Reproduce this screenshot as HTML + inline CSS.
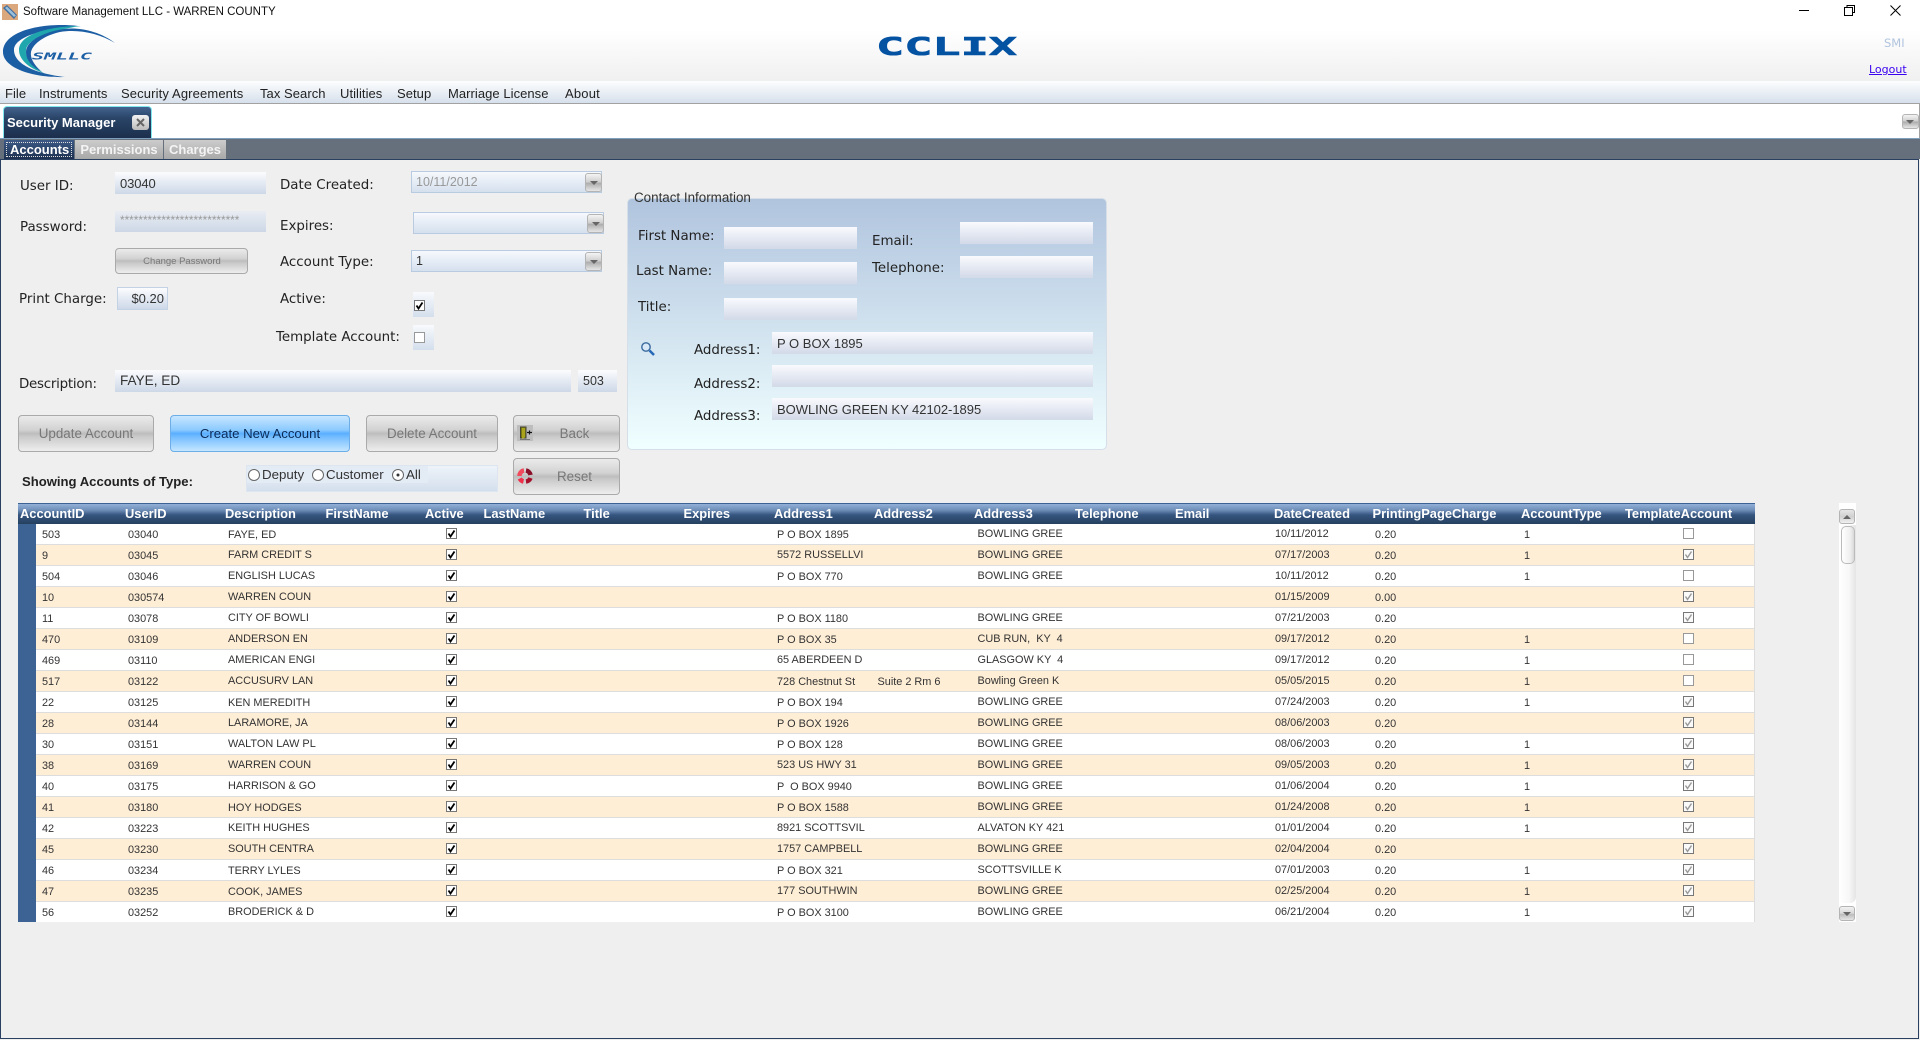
<!DOCTYPE html>
<html lang="en"><head><meta charset="utf-8"><title>CCLIX Security Manager</title>
<style>
html,body{margin:0;padding:0;background:#efefef;width:1920px;height:1040px;overflow:hidden}
body{position:relative;font-family:"Liberation Sans",Arial,sans-serif;color:#333}
div,span,a,svg{position:absolute;white-space:pre}
.lb{font-family:"DejaVu Sans",Verdana,sans-serif;font-size:13.4px;color:#222;line-height:18px;height:18px;margin-top:2px}
.in{background:linear-gradient(#fbfcfe,#cdd8e8);font-size:13px;line-height:22px;color:#333;padding-left:5px;box-sizing:border-box}
.in2{background:linear-gradient(#f9fafe,#d2d9e8);font-size:13px;line-height:24px;color:#333;padding-left:5px;box-sizing:border-box}
.cb{border:1px solid #b9cbe0;box-sizing:border-box;background:linear-gradient(#f6f9fd,#d5e0ee);font-size:12.5px;line-height:21px;padding-left:4px}
.cbb{width:17px;height:19px;box-sizing:border-box;border:1px solid #b4b4b4;border-radius:3px;background:linear-gradient(#f4f4f4,#ccc 50%,#aaa 52%,#e6e6e6)}
.cbb::after{content:"";position:absolute;left:4px;top:7px;border-left:4px solid transparent;border-right:4px solid transparent;border-top:4px solid #666}
.btn{box-sizing:border-box;border:1px solid #aaa;border-radius:4px;background:linear-gradient(#ebebeb,#d2d2d2 40%,#bdbdbd 50%,#cbcbcb 60%,#eee);color:#777;font-size:13.4px;line-height:35px;text-align:center}
.hd{top:0;font-weight:bold;font-size:12.9px;color:#fff;line-height:21px;height:21px}
.m{top:85px;font-size:13px;line-height:18px;color:#222;letter-spacing:.05px}
.r{left:36px;width:1718px;height:20px;border-bottom:1px solid #ddd;border-right:1px solid #ddd;background:#fff;font-size:10.9px;line-height:20px;color:#333}
.o{background:#ffeed6}
.r span{top:1px}
.r .u{top:0}
.a{left:6px}.b{left:92px}.c{left:192px}.d{left:741px}.e{left:841.5px}.f{left:941.5px}.g{left:1239px}.h{left:1339px}.i{left:1488px}
.k{left:410px;top:4px;width:11px;height:11px}
.t{left:1647px;top:4px;width:11px;height:11px}
</style></head><body>
<svg width="0" height="0"><defs>
<g id="kc"><rect x=".5" y=".5" width="10" height="10" fill="#fff" stroke="#777"/><path d="M2.5 5.5 4.5 8.5 8.5 2.5" fill="none" stroke="#000" stroke-width="1.8"/></g>
<g id="tc"><rect x=".5" y=".5" width="10" height="10" fill="#fafafa" stroke="#777"/><path d="M2.5 5.5 4.5 8.5 8.5 2.5" fill="none" stroke="#999" stroke-width="1.4"/></g>
<g id="tu"><rect x=".5" y=".5" width="10" height="10" fill="#fff" stroke="#999"/></g>
</defs></svg>

<!-- title bar -->
<div style="left:0;top:0;width:1920px;height:26px;background:#fff"></div>
<svg style="left:2px;top:4px" width="16" height="16" viewBox="0 0 16 16"><rect width="16" height="16" fill="#dba77c"/><path d="M1 4 5 1 15 11 12 15Z" fill="#3f6f9f"/><path d="M3 4 5 2.500 14 11.500 12 13Z" fill="#9cc0dc"/></svg>
<div style="left:23px;top:3px;font-size:11.5px;line-height:18px;color:#111">Software Management LLC - WARREN COUNTY</div>
<svg style="left:1795px;top:0" width="120" height="22" viewBox="0 0 120 22" fill="none" stroke="#000" stroke-width="1"><path d="M4 10.500H14"/><path d="M49.500 7.500H57.500V15.500H49.500ZM52 7V5.500H59.500V12.500H58"/><path d="M95.500 5.500 105.500 15.500M105.500 5.500 95.500 15.500"/></svg>

<!-- header -->
<div style="left:0;top:26px;width:1920px;height:55px;background:linear-gradient(#fff 4px,#f0f0f0)"></div>
<svg style="left:0;top:20px" width="125" height="62" viewBox="0 20 125 62">
<path d="M78 26C45 22 3 30 3 52C3 67 30 78 65 77C38 74 14 65 14 50C14 37 42 29 78 26Z" fill="#1b5ea4"/>
<path d="M81 26C50 26 19 34 19 50C19 60 30 69 44 73C33 67 25 59 26 50C27 39 52 30 81 26Z" fill="#1fa7ad"/>
<path d="M115 43C98 30 75 26 58 30C40 34 26 42 26 52C26 60 32 67 41 71C34 65 30 58 31 52C33 43 46 35 60 32C78 29 98 33 115 43Z" fill="#1b5ea4"/>
<text x="32" y="59.500" font-family="DejaVu Sans Mono" font-weight="bold" font-style="oblique" font-size="10" fill="#1d5fa5" textLength="60" lengthAdjust="spacingAndGlyphs">SMLLC</text>
</svg>
<svg style="left:875px;top:30px" width="145" height="30"><text x="1" y="25" font-family="DejaVu Sans Mono" font-weight="bold" font-size="25" fill="#0452a2" stroke="#0452a2" stroke-width=".6" textLength="141" lengthAdjust="spacingAndGlyphs">CCLIX</text></svg>
<div style="left:1884px;top:35px;font-family:'DejaVu Sans';font-size:11.5px;line-height:16px;color:#b0c4de">SMI</div>
<a style="left:1869px;top:62px;font-family:'DejaVu Sans';font-size:11px;line-height:16px;color:#3a00f0;text-decoration:underline">Logout</a>

<!-- menu -->
<div style="left:0;top:81px;width:1920px;height:22px;background:linear-gradient(#fdfefe,#d6e0ec)"></div>
<div style="left:0;top:103px;width:1920px;height:1px;background:#a2a2a2"></div>
<div class="m" style="left:5px">File</div>
<div class="m" style="left:39px">Instruments</div>
<div class="m" style="left:121px;letter-spacing:.13px">Security Agreements</div>
<div class="m" style="left:260px">Tax Search</div>
<div class="m" style="left:340px">Utilities</div>
<div class="m" style="left:397px">Setup</div>
<div class="m" style="left:448px">Marriage License</div>
<div class="m" style="left:565px;letter-spacing:.2px">About</div>

<!-- tab strip -->
<div style="left:0;top:104px;width:1920px;height:34px;background:#fff"></div>
<div style="left:1919px;top:104px;width:1px;height:34px;background:#a2a2a2"></div>
<div style="left:3px;top:106px;width:149px;height:32px;box-sizing:border-box;border:1px solid #7fe8ee;border-bottom:0;border-radius:4px 4px 0 0;background:linear-gradient(#43638f,#2a4568 35%,#1c2f4d)"></div>
<div style="left:7px;top:114px;font-size:13px;font-weight:bold;line-height:18px;color:#fff">Security Manager</div>
<div style="left:132px;top:115px;width:17px;height:15px;border-radius:3px;background:linear-gradient(#f2f2f2,#bbb)"></div>
<svg style="left:132px;top:115px" width="17" height="15" fill="none" stroke="#666" stroke-width="2"><path d="M5 4 12 11M12 4 5 11"/></svg>
<div style="left:1902px;top:114px;width:17px;height:15px;box-sizing:border-box;border:1px solid #b4b4b4;border-radius:3px;background:linear-gradient(#f4f4f4,#ccc 50%,#aaa 52%,#e6e6e6)"></div>
<div style="left:1906px;top:120px;width:0;height:0;border-left:4px solid transparent;border-right:4px solid transparent;border-top:4px solid #666"></div>

<!-- sub tabs -->
<div style="left:0;top:138px;width:1920px;height:21px;background:#666f7c;border-top:1px solid #7f9fbf;box-sizing:border-box"></div>
<div style="left:4px;top:140px;width:70px;height:19px;background:linear-gradient(#3c5a86,#1d3050)"></div>
<div style="left:6px;top:142px;width:66px;height:15px;box-sizing:border-box;border:1px dotted #ddd"></div>
<div style="left:10px;top:140px;font-size:13px;font-weight:bold;line-height:19px;color:#fff">Accounts</div>
<div style="left:75px;top:140px;width:88px;height:19px;background:linear-gradient(#ccc,#a8a8a8);font-size:13px;font-weight:bold;line-height:19px;color:#f4f4f4;text-align:center">Permissions</div>
<div style="left:164px;top:140px;width:62px;height:19px;background:linear-gradient(#ccc,#a8a8a8);font-size:13px;font-weight:bold;line-height:19px;color:#f4f4f4;text-align:center">Charges</div>

<!-- content frame -->
<div style="left:0;top:159px;width:1919px;height:880px;box-sizing:border-box;border:1px solid #2a4060;border-width:1px 1px 1.5px 1.5px;background:#efefef"></div>

<!-- left form -->
<div class="lb" style="left:20px;top:176px">User ID:</div>
<div class="in" style="left:115px;top:172px;width:151px;height:22px;line-height:24px;letter-spacing:-.1px">03040</div>
<div class="lb" style="left:20px;top:217px">Password:</div>
<div class="in" style="left:115px;top:211px;width:151px;height:21px;background:linear-gradient(#e9edf3,#ccd7e6);color:#999;font-size:11.8px;line-height:18px">**************************</div>
<div class="btn" style="left:115px;top:248px;width:133px;height:26px;font-size:9.500px;line-height:26px;padding-left:1px">Change Password</div>
<div class="lb" style="left:19px;top:289px">Print Charge:</div>
<div class="in" style="left:117px;top:287px;width:51px;height:23px;border:1px solid #c3d2e4;text-align:right;padding:0 3px 0 0">$0.20</div>

<div class="lb" style="left:280px;top:175px">Date Created:</div>
<div class="cb" style="left:411px;top:171px;width:191px;height:22px;color:#999">10/11/2012</div>
<div class="cbb" style="left:585px;top:173px"></div>
<div class="lb" style="left:280px;top:216px">Expires:</div>
<div class="cb" style="left:413px;top:212px;width:191px;height:22px"></div>
<div class="cbb" style="left:587px;top:214px"></div>
<div class="lb" style="left:280px;top:252px">Account Type:</div>
<div class="cb" style="left:411px;top:250px;width:191px;height:22px">1</div>
<div class="cbb" style="left:585px;top:252px"></div>
<div class="lb" style="left:280px;top:289px">Active:</div>
<div style="left:413px;top:292px;width:21px;height:25px;background:linear-gradient(#f8fafd,#d3deec)"></div>
<svg style="left:414px;top:300px" width="11" height="11"><use href="#kc"/></svg>
<div class="lb" style="left:276px;top:327px">Template Account:</div>
<div style="left:413px;top:325px;width:21px;height:25px;background:linear-gradient(#f8fafd,#d3deec)"></div>
<svg style="left:414px;top:332px" width="11" height="11"><use href="#tu"/></svg>
<div class="lb" style="left:19px;top:374px;letter-spacing:-.25px">Description:</div>
<div class="in" style="left:115px;top:370px;width:456px;height:22px;font-size:13.600px">FAYE, ED</div>
<div class="in" style="left:578px;top:370px;width:39px;height:22px;font-size:12.500px">503</div>

<div class="btn" style="left:18px;top:415px;width:136px;height:37px">Update Account</div>
<div class="btn" style="left:170px;top:415px;width:180px;height:37px;border-color:#6eaee8;color:#0b2b56;font-size:13.200px;background:linear-gradient(#c8e6ff,#8ccaff 40%,#5aaeff 50%,#74bdff 60%,#c4e6ff)">Create New Account</div>
<div class="btn" style="left:366px;top:415px;width:132px;height:37px">Delete Account</div>
<div class="btn" style="left:513px;top:415px;width:107px;height:37px;padding-left:16px">Back</div>
<div style="left:517px;top:425px;width:16px;height:16px;background:#bdbdbd"></div>
<svg style="left:517px;top:425px" width="16" height="16"><path d="M3 14.500H13" stroke="#777"/><path d="M3.500 2H9V13H3.500Z" fill="#7d7a12" stroke="#443"/><path d="M5 3H8V12.500L5 14Z" fill="#a9a41c"/><path d="M10 7.500H15M12.500 5.500V9.500" stroke="#111" stroke-width="1.200"/></svg>
<div class="btn" style="left:513px;top:458px;width:107px;height:37px;padding-left:16px">Reset</div>
<svg style="left:516px;top:467px" width="18" height="18" viewBox="0 0 18 18" fill="none" stroke-width="4.500"><path d="M3.500 9A5.500 5.500 0 0 1 8 3.500" stroke="#f04a5c"/><path d="M10 3.500A5.500 5.500 0 0 1 14.500 8" stroke="#8a0f28"/><path d="M14.500 11A5.500 5.500 0 0 1 10 14.500" stroke="#a5102a"/><path d="M7.500 14.500A5.500 5.500 0 0 1 3.800 11.500" stroke="#f0304a"/></svg>

<div style="left:22px;top:473px;font-size:13.100px;font-weight:bold;line-height:18px;color:#222">Showing Accounts of Type:</div>
<div style="left:246px;top:465px;width:252px;height:27px;box-sizing:border-box;border:1px solid #dde6f0;background:linear-gradient(#eef3f9,#d4dfed)"></div>
<div style="left:247px;top:466px;width:181px;height:17px;background:#e3ebf5"></div>
<svg style="left:247px;top:468px" width="160" height="14" fill="#fff" stroke="#666"><circle cx="7" cy="7" r="5.500"/><circle cx="71" cy="7" r="5.500"/><circle cx="151" cy="7" r="5.500"/><circle cx="151" cy="7" r="1.500" fill="#333" stroke="none"/></svg>
<div style="left:262px;top:466px;font-size:13.300px;line-height:18px;color:#333">Deputy</div>
<div style="left:326px;top:466px;font-size:13.300px;line-height:18px;color:#333">Customer</div>
<div style="left:406px;top:466px;font-size:13.300px;line-height:18px;color:#333">All</div>

<!-- contact -->
<div style="left:627px;top:198px;width:480px;height:252px;box-sizing:border-box;border:1px solid #d6dfe8;border-radius:5px;background:linear-gradient(#b0c4de,#f0ffff)"></div>
<div style="left:634px;top:189px;font-size:13.400px;line-height:18px;color:#333">Contact Information</div>
<div class="lb" style="left:638px;top:226px">First Name:</div>
<div class="in2" style="left:724px;top:227px;width:133px;height:22px"></div>
<div class="lb" style="left:872px;top:231px">Email:</div>
<div class="in2" style="left:960px;top:222px;width:133px;height:22px"></div>
<div class="lb" style="left:636px;top:261px">Last Name:</div>
<div class="in2" style="left:724px;top:262px;width:133px;height:22px"></div>
<div class="lb" style="left:872px;top:258px">Telephone:</div>
<div class="in2" style="left:960px;top:256px;width:133px;height:22px"></div>
<div class="lb" style="left:638px;top:297px">Title:</div>
<div class="in2" style="left:724px;top:298px;width:133px;height:22px"></div>
<svg style="left:640px;top:341px" width="16" height="16" viewBox="0 0 16 16" fill="none"><circle cx="6" cy="6" r="4.200" fill="#d8e8f7" stroke="#3a6a9e" stroke-width="1.400"/><path d="M9.500 9.500 14 14" stroke="#2468b8" stroke-width="2.500"/></svg>
<div class="lb" style="left:694px;top:340px">Address1:</div>
<div class="in2" style="left:772px;top:332px;width:321px;height:22px">P O BOX 1895</div>
<div class="lb" style="left:694px;top:374px">Address2:</div>
<div class="in2" style="left:772px;top:365px;width:321px;height:22px"></div>
<div class="lb" style="left:694px;top:406px">Address3:</div>
<div class="in2" style="left:772px;top:398px;width:321px;height:22px;letter-spacing:-.03px">BOWLING GREEN KY 42102-1895</div>

<!-- grid -->
<div style="left:18px;top:503px;width:1737px;height:419px;overflow:hidden">
<div style="left:0;top:0;width:1737px;height:21px;border-top:1px solid #3d6394;box-sizing:border-box;background:linear-gradient(#93b1d8,#6f8fba 30%,#35557f 55%,#26405f)"></div>
<div style="left:0;top:21px;width:18px;height:398px;background:#3d6394"></div>
<div style="left:18px;top:21px;width:1px;height:398px;background:#dfe6ee"></div>
<span class="hd" style="left:2px">AccountID</span><span class="hd" style="left:107px">UserID</span><span class="hd" style="left:207px">Description</span><span class="hd" style="left:307.5px">FirstName</span><span class="hd" style="left:407px">Active</span><span class="hd" style="left:465.5px">LastName</span><span class="hd" style="left:565.5px">Title</span><span class="hd" style="left:665.5px">Expires</span><span class="hd" style="left:756px">Address1</span><span class="hd" style="left:856px">Address2</span><span class="hd" style="left:956px">Address3</span><span class="hd" style="left:1057px">Telephone</span><span class="hd" style="left:1157px">Email</span><span class="hd" style="left:1256px">DateCreated</span><span class="hd" style="left:1354.5px">PrintingPageCharge</span><span class="hd" style="left:1503px">AccountType</span><span class="hd" style="left:1607px">TemplateAccount</span>
</div>
<div style="left:0;top:0;width:1920px;height:922px;overflow:hidden;pointer-events:none">
<div class="r" style="top:524px"><span class="a">503</span><span class="b">03040</span><span class="c">FAYE, ED</span><svg class="k"><use href="#kc"/></svg><span class="d">P O BOX 1895</span><span class="f u">BOWLING GREE</span><span class="g u">10/11/2012</span><span class="h">0.20</span><span class="i">1</span><svg class="t"><use href="#tu"/></svg></div>
<div class="r o" style="top:545px"><span class="a">9</span><span class="b">03045</span><span class="c u">FARM CREDIT S</span><svg class="k"><use href="#kc"/></svg><span class="d u">5572 RUSSELLVI</span><span class="f u">BOWLING GREE</span><span class="g u">07/17/2003</span><span class="h">0.20</span><span class="i">1</span><svg class="t"><use href="#tc"/></svg></div>
<div class="r" style="top:566px"><span class="a">504</span><span class="b">03046</span><span class="c u">ENGLISH LUCAS</span><svg class="k"><use href="#kc"/></svg><span class="d">P O BOX 770</span><span class="f u">BOWLING GREE</span><span class="g u">10/11/2012</span><span class="h">0.20</span><span class="i">1</span><svg class="t"><use href="#tu"/></svg></div>
<div class="r o" style="top:587px"><span class="a">10</span><span class="b">030574</span><span class="c u">WARREN COUN</span><svg class="k"><use href="#kc"/></svg><span class="g u">01/15/2009</span><span class="h">0.00</span><svg class="t"><use href="#tc"/></svg></div>
<div class="r" style="top:608px"><span class="a">11</span><span class="b">03078</span><span class="c u">CITY OF BOWLI</span><svg class="k"><use href="#kc"/></svg><span class="d">P O BOX 1180</span><span class="f u">BOWLING GREE</span><span class="g u">07/21/2003</span><span class="h">0.20</span><svg class="t"><use href="#tc"/></svg></div>
<div class="r o" style="top:629px"><span class="a">470</span><span class="b">03109</span><span class="c u">ANDERSON EN</span><svg class="k"><use href="#kc"/></svg><span class="d">P O BOX 35</span><span class="f u">CUB RUN,  KY  4</span><span class="g u">09/17/2012</span><span class="h">0.20</span><span class="i">1</span><svg class="t"><use href="#tu"/></svg></div>
<div class="r" style="top:650px"><span class="a">469</span><span class="b">03110</span><span class="c u">AMERICAN ENGI</span><svg class="k"><use href="#kc"/></svg><span class="d u">65 ABERDEEN D</span><span class="f u">GLASGOW KY  4</span><span class="g u">09/17/2012</span><span class="h">0.20</span><span class="i">1</span><svg class="t"><use href="#tu"/></svg></div>
<div class="r o" style="top:671px"><span class="a">517</span><span class="b">03122</span><span class="c u">ACCUSURV LAN</span><svg class="k"><use href="#kc"/></svg><span class="d">728 Chestnut St</span><span class="e">Suite 2 Rm 6</span><span class="f u">Bowling Green K</span><span class="g u">05/05/2015</span><span class="h">0.20</span><span class="i">1</span><svg class="t"><use href="#tu"/></svg></div>
<div class="r" style="top:692px"><span class="a">22</span><span class="b">03125</span><span class="c">KEN MEREDITH</span><svg class="k"><use href="#kc"/></svg><span class="d">P O BOX 194</span><span class="f u">BOWLING GREE</span><span class="g u">07/24/2003</span><span class="h">0.20</span><span class="i">1</span><svg class="t"><use href="#tc"/></svg></div>
<div class="r o" style="top:713px"><span class="a">28</span><span class="b">03144</span><span class="c u">LARAMORE, JA</span><svg class="k"><use href="#kc"/></svg><span class="d">P O BOX 1926</span><span class="f u">BOWLING GREE</span><span class="g u">08/06/2003</span><span class="h">0.20</span><svg class="t"><use href="#tc"/></svg></div>
<div class="r" style="top:734px"><span class="a">30</span><span class="b">03151</span><span class="c u">WALTON LAW PL</span><svg class="k"><use href="#kc"/></svg><span class="d">P O BOX 128</span><span class="f u">BOWLING GREE</span><span class="g u">08/06/2003</span><span class="h">0.20</span><span class="i">1</span><svg class="t"><use href="#tc"/></svg></div>
<div class="r o" style="top:755px"><span class="a">38</span><span class="b">03169</span><span class="c u">WARREN COUN</span><svg class="k"><use href="#kc"/></svg><span class="d u">523 US HWY 31</span><span class="f u">BOWLING GREE</span><span class="g u">09/05/2003</span><span class="h">0.20</span><span class="i">1</span><svg class="t"><use href="#tc"/></svg></div>
<div class="r" style="top:776px"><span class="a">40</span><span class="b">03175</span><span class="c u">HARRISON &amp; GO</span><svg class="k"><use href="#kc"/></svg><span class="d">P  O BOX 9940</span><span class="f u">BOWLING GREE</span><span class="g u">01/06/2004</span><span class="h">0.20</span><span class="i">1</span><svg class="t"><use href="#tc"/></svg></div>
<div class="r o" style="top:797px"><span class="a">41</span><span class="b">03180</span><span class="c">HOY HODGES</span><svg class="k"><use href="#kc"/></svg><span class="d">P O BOX 1588</span><span class="f u">BOWLING GREE</span><span class="g u">01/24/2008</span><span class="h">0.20</span><span class="i">1</span><svg class="t"><use href="#tc"/></svg></div>
<div class="r" style="top:818px"><span class="a">42</span><span class="b">03223</span><span class="c u">KEITH HUGHES</span><svg class="k"><use href="#kc"/></svg><span class="d u">8921 SCOTTSVIL</span><span class="f u">ALVATON KY 421</span><span class="g u">01/01/2004</span><span class="h">0.20</span><span class="i">1</span><svg class="t"><use href="#tc"/></svg></div>
<div class="r o" style="top:839px"><span class="a">45</span><span class="b">03230</span><span class="c u">SOUTH CENTRA</span><svg class="k"><use href="#kc"/></svg><span class="d u">1757 CAMPBELL</span><span class="f u">BOWLING GREE</span><span class="g u">02/04/2004</span><span class="h">0.20</span><svg class="t"><use href="#tc"/></svg></div>
<div class="r" style="top:860px"><span class="a">46</span><span class="b">03234</span><span class="c">TERRY LYLES</span><svg class="k"><use href="#kc"/></svg><span class="d">P O BOX 321</span><span class="f u">SCOTTSVILLE K</span><span class="g u">07/01/2003</span><span class="h">0.20</span><span class="i">1</span><svg class="t"><use href="#tc"/></svg></div>
<div class="r o" style="top:881px"><span class="a">47</span><span class="b">03235</span><span class="c">COOK, JAMES</span><svg class="k"><use href="#kc"/></svg><span class="d u">177 SOUTHWIN</span><span class="f u">BOWLING GREE</span><span class="g u">02/25/2004</span><span class="h">0.20</span><span class="i">1</span><svg class="t"><use href="#tc"/></svg></div>
<div class="r" style="top:902px"><span class="a">56</span><span class="b">03252</span><span class="c u">BRODERICK &amp; D</span><svg class="k"><use href="#kc"/></svg><span class="d">P O BOX 3100</span><span class="f u">BOWLING GREE</span><span class="g u">06/21/2004</span><span class="h">0.20</span><span class="i">1</span><svg class="t"><use href="#tc"/></svg></div>
</div>

<!-- scrollbar -->
<div style="left:1839px;top:503px;width:17px;height:419px;background:#fff"></div>
<div style="left:1839px;top:525px;width:17px;height:378px;border-radius:0 0 6px 6px;background:linear-gradient(90deg,#fff,#f7f7f7 60%,#e4e4e4)"></div>
<div style="left:1839px;top:509px;width:16px;height:15px;box-sizing:border-box;border:1px solid #b4b4b4;border-radius:3px;background:linear-gradient(#e6e6e6,#d0d0d0 50%,#f0f0f0)"></div>
<div style="left:1843px;top:515px;width:0;height:0;border-left:4px solid transparent;border-right:4px solid transparent;border-bottom:4px solid #666"></div>
<div style="left:1841px;top:526px;width:14px;height:38px;box-sizing:border-box;border:1px solid #bbb;border-radius:5px;background:linear-gradient(90deg,#fff,#eee 70%,#d8d8d8)"></div>
<div style="left:1839px;top:906px;width:16px;height:15px;box-sizing:border-box;border:1px solid #b4b4b4;border-radius:3px;background:linear-gradient(#f2f2f2,#d8d8d8 50%,#bbb 55%,#e6e6e6)"></div>
<div style="left:1843px;top:912px;width:0;height:0;border-left:4px solid transparent;border-right:4px solid transparent;border-top:4px solid #666"></div>
</body></html>
